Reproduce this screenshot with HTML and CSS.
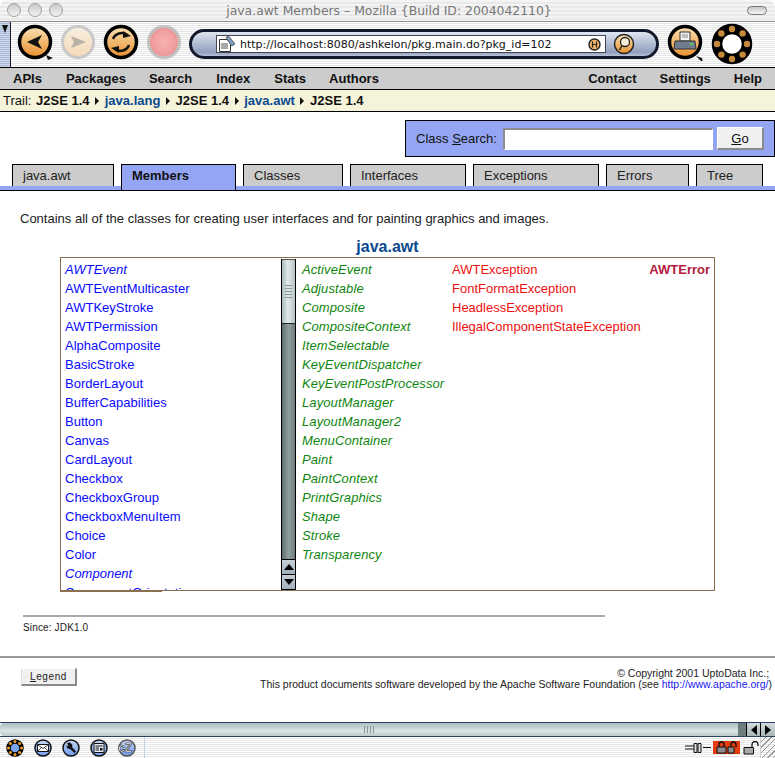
FILE: index.html

```html
<!DOCTYPE html>
<html lang="en">

<head>
    <meta charset="UTF-8">
    <title>java.awt Members - Mozilla {Build ID: 2004042110}</title>
    <link rel="stylesheet" href="styles.css">
</head>

<body>
    <svg class="defs" width="0" height="0">
        <defs>
            <linearGradient id="amber" x1="0" y1="0" x2="0" y2="1">
                <stop offset="0" stop-color="#f9e0b4" />
                <stop offset="1" stop-color="#e98f2c" />
            </linearGradient>
            <linearGradient id="peach" x1="0" y1="0" x2="0" y2="1">
                <stop offset="0" stop-color="#f8efe2" />
                <stop offset="1" stop-color="#f5d9b6" />
            </linearGradient>
            <radialGradient id="blush" cx="0.5" cy="0.5" r="0.5">
                <stop offset="0" stop-color="#f7b0b0" />
                <stop offset="0.7" stop-color="#f2a0a0" />
                <stop offset="1" stop-color="#e99090" />
            </radialGradient>
            <linearGradient id="sky" x1="0" y1="0" x2="0" y2="1">
                <stop offset="0" stop-color="#c8d8f4" />
                <stop offset="1" stop-color="#6f9bf0" />
            </linearGradient>
        </defs>
    </svg>

    <div class="window">
        <header class="titlebar">
            <div class="lights">
                <span class="light"></span>
                <span class="light"></span>
                <span class="light"></span>
            </div>
            <div class="win-title">java.awt Members &#8211; Mozilla {Build ID: 2004042110}</div>
            <span class="collapse"></span>
        </header>

        <div class="toolbar">
            <div class="grip"><span class="grip-arrow"></span></div>
            <svg class="nav-icons" width="172" height="46" viewBox="0 0 172 46">
                <circle cx="24" cy="20" r="15.5" fill="url(#amber)" stroke="#000" stroke-width="3.5" />
                <path d="M16 20 L31 13 L27 20 L31 27 Z" fill="#111" />
                <path d="M35 33 L42 36 L37 38 Z" fill="#111" />
                <circle cx="67" cy="20" r="15.5" fill="url(#peach)" stroke="#c9c9c9" stroke-width="3" />
                <path d="M75 20 L60 14 L63 20 L60 26 Z" fill="#b8b2a8" />
                <circle cx="110" cy="20" r="15.5" fill="url(#amber)" stroke="#000" stroke-width="3.5" />
                <path d="M102 17 A9 9 0 0 1 116 13" fill="none" stroke="#111" stroke-width="2.5" />
                <path d="M112 9 L120 14 L112 16 Z" fill="#111" />
                <path d="M118 23 A9 9 0 0 1 104 27" fill="none" stroke="#111" stroke-width="2.5" />
                <path d="M108 31 L100 26 L108 24 Z" fill="#111" />
                <circle cx="153" cy="20" r="15.5" fill="url(#blush)" stroke="#c4c0c0" stroke-width="3" />
            </svg>
            <div class="urlbar">
                <div class="urlfield">
                    <svg class="page-icon" width="18" height="17" viewBox="0 0 18 17">
                        <path d="M1.500 3.500 H9 L12.500 7 V15.500 H1.500 Z" fill="#fff" stroke="#333" />
                        <path d="M3 8 H10 M3 10 H10 M3 12 H10" stroke="#555" />
                        <path d="M8 1 L11 0.500 L17 8 L13.500 10 Z" fill="#7d9dc4" stroke="#333" stroke-width="0.700" />
                    </svg>
                    <span class="urltext">http://localhost:8080/ashkelon/pkg.main.do?pkg_id=102</span>
                    <svg class="history-icon" width="13" height="13" viewBox="0 0 13 13">
                        <circle cx="6.500" cy="6.500" r="5.500" fill="#f1b268" stroke="#222" stroke-width="1.400" />
                        <path d="M4.500 3.500 V9.500 M8.500 3.500 V9.500 M4.500 6.500 H8.500" stroke="#222" stroke-width="1.200" fill="none" />
                    </svg>
                </div>
                <svg class="search-icon" width="22" height="22" viewBox="0 0 22 22">
                    <circle cx="11" cy="11" r="9.500" fill="url(#amber)" stroke="#222" stroke-width="1.500" />
                    <circle cx="12" cy="9" r="4.500" fill="#fbeed8" stroke="#222" stroke-width="1.300" />
                    <path d="M9 12.500 L6.500 17" stroke="#222" stroke-width="1.500" />
                </svg>
            </div>
            <svg class="print-icon" width="38" height="38" viewBox="0 0 38 38">
                <circle cx="19" cy="19" r="15.500" fill="url(#amber)" stroke="#000" stroke-width="3.500" />
                <path d="M14 9 H24 V18 H14 Z" fill="#f4f4f4" stroke="#333" />
                <path d="M16 12 H22 M16 14 H22" stroke="#888" />
                <path d="M9 18 H29 L30 26 H8 Z" fill="#717c8e" stroke="#333" />
                <path d="M24 21 H27" stroke="#4fce5a" stroke-width="2" />
                <path d="M30 33 L36 35 L37 40" fill="#111" />
            </svg>
            <svg class="ring-icon" width="42" height="42" viewBox="0 0 42 42">
                <circle cx="21" cy="21" r="15" fill="#fff" stroke="#000" stroke-width="10.500" />
                <circle cx="21" cy="6" r="3.200" fill="#c88a3a" />
                <circle cx="31.600" cy="10.400" r="3.200" fill="#c88a3a" />
                <circle cx="36" cy="21" r="3.200" fill="#c88a3a" />
                <circle cx="31.600" cy="31.600" r="3.200" fill="#c88a3a" />
                <circle cx="21" cy="36" r="3.200" fill="#c88a3a" />
                <circle cx="10.400" cy="31.600" r="3.200" fill="#c88a3a" />
                <circle cx="6" cy="21" r="3.200" fill="#c88a3a" />
                <circle cx="10.400" cy="10.400" r="3.200" fill="#c88a3a" />
            </svg>
        </div>

        <nav class="menubar">
            <div class="menu-group">
                <a class="m-apis">APIs</a>
                <a class="m-packages">Packages</a>
                <a class="m-search">Search</a>
                <a class="m-index">Index</a>
                <a class="m-stats">Stats</a>
                <a>Authors</a>
            </div>
            <div class="menu-group">
                <a class="m-contact">Contact</a>
                <a class="m-settings">Settings</a>
                <a>Help</a>
            </div>
        </nav>

        <div class="trail">
            Trail:
            <b class="trail-first">J2SE 1.4</b><span class="sep"></span><a>java.lang</a><span class="sep"></span><b>J2SE 1.4</b><span class="sep"></span><a>java.awt</a><span class="sep"></span><b>J2SE 1.4</b>
        </div>

        <main class="page">
            <div class="search-row">
                <form class="class-search">
                    <label class="search-label">Class <u>S</u>earch:</label>
                    <input class="search-input" type="text">
                    <button class="go-btn" type="button"><u>G</u>o</button>
                </form>
            </div>

            <div class="tabs">
                <a class="tab tab-pkg">java.awt</a>
                <a class="tab tab-members active">Members</a>
                <a class="tab tab-classes">Classes</a>
                <a class="tab tab-interfaces">Interfaces</a>
                <a class="tab tab-exceptions">Exceptions</a>
                <a class="tab tab-errors">Errors</a>
                <a class="tab tab-tree">Tree</a>
            </div>

            <p class="desc">Contains all of the classes for creating user interfaces and for painting graphics and images.</p>

            <h2 class="pkg-name">java.awt</h2>

            <div class="member-box">
                <div class="class-pane">
                    <ul class="names classes">
                        <li><i>AWTEvent</i></li>
                        <li>AWTEventMulticaster</li>
                        <li>AWTKeyStroke</li>
                        <li>AWTPermission</li>
                        <li>AlphaComposite</li>
                        <li>BasicStroke</li>
                        <li>BorderLayout</li>
                        <li>BufferCapabilities</li>
                        <li>Button</li>
                        <li>Canvas</li>
                        <li>CardLayout</li>
                        <li>Checkbox</li>
                        <li>CheckboxGroup</li>
                        <li>CheckboxMenuItem</li>
                        <li>Choice</li>
                        <li>Color</li>
                        <li><i>Component</i></li>
                        <li>ComponentOrientation</li>
                    </ul>
                </div>
                <div class="vscroll">
                    <div class="v-thumb"><span class="v-grip"></span></div>
                    <div class="v-track"></div>
                    <div class="v-btn"><span class="tri-up"></span></div>
                    <div class="v-btn"><span class="tri-down"></span></div>
                </div>
                <ul class="names interfaces">
                    <li>ActiveEvent</li>
                    <li>Adjustable</li>
                    <li>Composite</li>
                    <li>CompositeContext</li>
                    <li>ItemSelectable</li>
                    <li>KeyEventDispatcher</li>
                    <li>KeyEventPostProcessor</li>
                    <li>LayoutManager</li>
                    <li>LayoutManager2</li>
                    <li>MenuContainer</li>
                    <li>Paint</li>
                    <li>PaintContext</li>
                    <li>PrintGraphics</li>
                    <li>Shape</li>
                    <li>Stroke</li>
                    <li>Transparency</li>
                </ul>
                <ul class="names exceptions">
                    <li>AWTException</li>
                    <li>FontFormatException</li>
                    <li>HeadlessException</li>
                    <li>IllegalComponentStateException</li>
                </ul>
                <ul class="names errors">
                    <li>AWTError</li>
                </ul>
            </div>

            <div class="since">Since: JDK1.0</div>

            <footer class="page-foot">
                <button class="legend-btn" type="button"><u>L</u>egend</button>
                <div class="copyright">
                    &copy; Copyright 2001 UptoData Inc.;&nbsp;<br>
                    This product documents software developed by the Apache Software Foundation (see <a>http://www.apache.org/</a>)
                </div>
            </footer>
        </main>

        <div class="hscroll">
            <div class="h-thumb"><span class="h-grip"></span></div>
            <div class="h-track"></div>
            <div class="h-btn"><span class="tri-left"></span></div>
            <div class="h-btn"><span class="tri-right"></span></div>
        </div>

        <div class="statusbar">
            <div class="task-icons">
                <svg width="18" height="18" viewBox="0 0 18 18">
                    <circle cx="9" cy="9" r="6.500" fill="#7ba3ef" stroke="#000" stroke-width="4.500" />
                    <circle cx="9" cy="2.500" r="1.500" fill="#f0a030" />
                    <circle cx="15.500" cy="9" r="1.500" fill="#f0a030" />
                    <circle cx="9" cy="15.500" r="1.500" fill="#f0a030" />
                    <circle cx="2.500" cy="9" r="1.500" fill="#f0a030" />
                    <circle cx="13.600" cy="4.400" r="1.500" fill="#f0a030" />
                    <circle cx="13.600" cy="13.600" r="1.500" fill="#f0a030" />
                    <circle cx="4.400" cy="13.600" r="1.500" fill="#f0a030" />
                    <circle cx="4.400" cy="4.400" r="1.500" fill="#f0a030" />
                </svg>
                <svg width="18" height="18" viewBox="0 0 18 18">
                    <circle cx="9" cy="9" r="8" fill="url(#sky)" stroke="#111" stroke-width="1.500" />
                    <path d="M3.500 5.500 H14.500 V12.500 H3.500 Z" fill="#fff" stroke="#111" />
                    <path d="M3.500 5.500 L9 9.500 L14.500 5.500 M3.500 12.500 L7.500 8.500 M14.500 12.500 L10.500 8.500" fill="none" stroke="#111" stroke-width="0.800" />
                </svg>
                <svg width="18" height="18" viewBox="0 0 18 18">
                    <circle cx="9" cy="9" r="8" fill="url(#sky)" stroke="#111" stroke-width="1.500" />
                    <path d="M5 4 L8 3.500 L10.500 6 L10 8 L14 12.500 L12.500 14 L8 10 L5.500 9.500 L4 6.500 L6.500 7.500 Z" fill="#111" />
                </svg>
                <svg width="18" height="18" viewBox="0 0 18 18">
                    <circle cx="9" cy="9" r="8" fill="url(#sky)" stroke="#111" stroke-width="1.500" />
                    <path d="M4 4.500 H14 V13.500 H4 Z" fill="#e8eef8" stroke="#111" />
                    <path d="M5.500 7 H12.500 M5.500 9 H9 M5.500 11 H9" stroke="#111" />
                    <path d="M10 9 H12.500 V11.500 H10 Z" fill="#111" />
                </svg>
                <svg width="18" height="18" viewBox="0 0 18 18">
                    <circle cx="9" cy="9" r="8" fill="url(#sky)" stroke="#555" stroke-width="1.500" />
                    <text x="0" y="13" class="chat-mark">cZ</text>
                </svg>
            </div>
            <div class="status-fill"></div>
            <svg class="plug" width="26" height="12" viewBox="0 0 26 12">
                <path d="M0 4 H9 M0 7 H9 M18 5.500 H26" stroke="#111" stroke-width="1.200" />
                <path d="M9 1.500 H12 V10.500 H9 Z M13 1.500 H16 V10.500 H13 Z" fill="#ddd" stroke="#111" />
            </svg>
            <div class="lock-cell">
                <svg width="22" height="13" viewBox="0 0 22 13">
                    <path d="M1 6 H10 V12 H1 Z" fill="#8d8d8d" stroke="#111" />
                    <path d="M3 6 V3.500 A2.500 2.500 0 0 1 8 3.500 V6" fill="none" stroke="#111" stroke-width="1.300" />
                    <path d="M12 6 H18 V12 H12 Z" fill="#8d8d8d" stroke="#111" />
                    <path d="M15 6 V3.500 A2.500 2.500 0 0 1 20 3.500 V6" fill="none" stroke="#111" stroke-width="1.300" />
                </svg>
            </div>
            <svg class="lock-open" width="17" height="14" viewBox="0 0 17 14">
                <path d="M1 6.500 H10.500 V13 H1 Z" fill="#aaa" stroke="#111" />
                <path d="M9 6.500 V3.500 A3 3 0 0 1 15 3.500 V5" fill="none" stroke="#111" stroke-width="1.300" />
            </svg>
            <div class="resize"></div>
        </div>
    </div>
</body>

</html>
```

FILE: styles.css

```css
* {
    box-sizing: border-box;
}

body {
    margin: 0;
    background-color: #fff;
    font-family: 'Liberation Sans', Arial, sans-serif;
    color: #222;
    overflow: hidden;
}

ul {
    list-style: none;
    margin: 0;
    padding: 0;
}

.defs {
    display: block;
}

.window {
    width: 775px;
    height: 758px;
    display: flex;
    flex-direction: column;
    overflow: hidden;
}

/* title bar */
.titlebar {
    height: 22px;
    flex: none;
    display: flex;
    align-items: center;
    justify-content: space-between;
    padding: 0 8px 1px 7px;
    border-bottom: 1px solid #8f8f8f;
    border-radius: 7px 7px 0 0;
    background: repeating-linear-gradient(#f4f4f4 0 2px, #e9e9e9 2px 4px);
}

.lights {
    display: flex;
    gap: 7px;
}

.light {
    width: 14px;
    height: 14px;
    border-radius: 50%;
    border: 1px solid #a0a0a0;
    background: linear-gradient(#c9c9c9, #f4f4f4);
}

.win-title {
    font-family: 'DejaVu Sans', sans-serif;
    font-size: 12.4px;
    color: #777;
}

.collapse {
    width: 20px;
    height: 9px;
    margin-left: 32px;
    border-radius: 5px;
    border: 1px solid #777;
    background: linear-gradient(#c8c8c8, #f5f5f5);
}

/* toolbar */
.toolbar {
    height: 46px;
    flex: none;
    display: flex;
    align-items: flex-start;
    border-bottom: 1px solid #000;
    background: repeating-linear-gradient(#fff 0 1px, #e4e4e4 1px 2px);
}

.grip {
    width: 11px;
    height: 45px;
    flex: none;
    padding: 3px 0 0 2px;
    border-right: 1px solid #222;
    background: repeating-linear-gradient(#cfd9ee 0 1px, #a9b8d6 1px 2px);
}

.grip-arrow {
    display: block;
    width: 0;
    height: 0;
    border-left: 3px solid transparent;
    border-right: 3px solid transparent;
    border-top: 8px solid #111;
}

.nav-icons {
    flex: none;
}

.urlbar {
    width: 470px;
    height: 30px;
    flex: none;
    margin: 7px 0 0 6px;
    display: flex;
    align-items: center;
    gap: 7px;
    padding-left: 24px;
    border: 3px solid #14182a;
    border-radius: 16px;
    background: linear-gradient(#dfe5f1, #8f9fbe 85%, #b9c3d7);
}

.urlfield {
    width: 390px;
    height: 18px;
    flex: none;
    display: flex;
    align-items: center;
    padding: 0 4px 0 1px;
    border: 1px solid #445;
    background-color: #fff;
}

.page-icon {
    flex: none;
}

.urltext {
    flex: 1;
    margin-left: 4px;
    font-family: 'DejaVu Sans', sans-serif;
    font-size: 11px;
    color: #111;
    white-space: nowrap;
}

.history-icon {
    flex: none;
}

.search-icon {
    flex: none;
}

.print-icon {
    flex: none;
    margin: 1px 0 0 7px;
}

.ring-icon {
    flex: none;
    margin: 1px 0 0 7px;
}

/* site menu */
.menubar {
    height: 22px;
    flex: none;
    display: flex;
    justify-content: space-between;
    align-items: center;
    padding: 0 13px 1px;
    background-color: #ccc;
    border-bottom: 1px solid #000;
    font-size: 13px;
    font-weight: bold;
    color: #111;
}

.menu-group {
    display: flex;
}

.m-apis {
    margin-right: 24px;
}

.m-packages {
    margin-right: 23px;
}

.m-search,
.m-index {
    margin-right: 24px;
}

.m-stats {
    margin-right: 23px;
}

.m-contact,
.m-settings {
    margin-right: 23px;
}

.trail {
    height: 22px;
    flex: none;
    padding: 3px 0 0 3px;
    background-color: #f5f3da;
    border-bottom: 1px solid #000;
    font-size: 13px;
    color: #111;
    white-space: nowrap;
}

.trail-first {
    margin-left: 1px;
}

.trail a {
    font-weight: bold;
    color: #0b4a8f;
}

.sep {
    display: inline-block;
    width: 0;
    height: 0;
    margin: 0 5.6px;
    border-top: 4px solid transparent;
    border-bottom: 4px solid transparent;
    border-left: 4px solid #111;
}

/* page */
.page {
    height: 610px;
    flex: none;
    padding-top: 8px;
    overflow: hidden;
}

.search-row {
    display: flex;
    justify-content: flex-end;
}

.class-search {
    width: 370px;
    height: 37px;
    margin: 0;
    display: flex;
    align-items: center;
    padding-left: 10px;
    border: 1px solid #000;
    background-color: #94a6f3;
    font-size: 13px;
}

.search-label {
    width: 87px;
    flex: none;
    color: #111;
}

.search-input {
    width: 210px;
    height: 22px;
    flex: none;
    border: 1px solid #fff;
    border-top: 2px solid #8c8c8c;
    border-left: 2px solid #8c8c8c;
    background-color: #fff;
}

.go-btn {
    width: 47px;
    height: 23px;
    flex: none;
    margin-left: 4px;
    padding: 0;
    border: 0;
    border-top: 1px solid #fff;
    border-left: 1px solid #fff;
    border-right: 2px solid #8a8a8a;
    border-bottom: 2px solid #8a8a8a;
    background-color: #f0f0f0;
    font-family: 'Liberation Sans', Arial, sans-serif;
    font-size: 13px;
    color: #111;
}

.tabs {
    height: 27px;
    margin-top: 7px;
    display: flex;
    gap: 7px;
    padding-left: 12px;
    align-items: flex-start;
    border-bottom: 1px solid #000;
    background: linear-gradient(transparent 22px, #94a6f3 22px);
}

.tab {
    height: 22px;
    padding: 3px 0 0 10px;
    border: 1px solid #000;
    border-bottom: 0;
    background-color: #ccc;
    font-size: 13px;
    color: #222;
}

.tab.active {
    height: 26px;
    background-color: #94a6f3;
    font-weight: bold;
    color: #111;
    padding-left: 10px;
}

.tab-pkg {
    width: 102px;
}

.tab-members {
    width: 115px;
}

.tab-classes {
    width: 100px;
}

.tab-interfaces {
    width: 116px;
}

.tab-exceptions {
    width: 126px;
}

.tab-errors {
    width: 83px;
}

.tab-tree {
    width: 67px;
}

.desc {
    margin: 20px 0 0 20px;
    font-size: 13px;
    line-height: 16px;
    color: #222;
}

.pkg-name {
    margin: 11px 0 1px;
    font-size: 16px;
    line-height: 18px;
    font-weight: bold;
    text-align: center;
    color: #0b4a8f;
}

.member-box {
    position: relative;
    width: 655px;
    height: 334px;
    margin-left: 60px;
    display: flex;
    padding-top: 1px;
    border: 1px solid #8b6f4e;
}

/* the inner frame pokes one pixel below the outer border */
.member-box::after {
    content: "";
    position: absolute;
    left: -1px;
    bottom: -2px;
    width: 102px;
    height: 1px;
    background-color: #8b6f4e;
}

.class-pane {
    width: 220px;
    height: 331px;
    flex: none;
    overflow: hidden;
    padding-left: 4px;
}

.names {
    flex: none;
    padding-top: 1px;
    font-size: 13px;
    line-height: 19px;
}

.classes {
    color: #0a0aff;
}

.vscroll {
    width: 15px;
    height: 331px;
    flex: none;
    display: flex;
    flex-direction: column;
    border: 1px solid #000;
    border-top: 0;
}

.v-thumb {
    height: 65px;
    flex: none;
    display: flex;
    align-items: center;
    justify-content: center;
    border-top: 1px solid #555;
    border-bottom: 1px solid #222;
    background: linear-gradient(90deg, #a9b9b9, #e2eaea 45%, #b5c3c3);
}

.v-grip {
    width: 7px;
    height: 14px;
    background: repeating-linear-gradient(#8a9898 0 1px, transparent 1px 3px);
}

.v-track {
    flex: 1;
    background: linear-gradient(90deg, #5f6f6f, #8f9f9f 50%, #6d7d7d);
}

.v-btn {
    height: 15px;
    flex: none;
    display: flex;
    align-items: center;
    justify-content: center;
    border-top: 1px solid #000;
    background: linear-gradient(#c5d0d8, #9fb0bb);
}

.tri-up {
    width: 0;
    height: 0;
    border-left: 5px solid transparent;
    border-right: 5px solid transparent;
    border-bottom: 6px solid #000;
}

.tri-down {
    width: 0;
    height: 0;
    border-left: 5px solid transparent;
    border-right: 5px solid transparent;
    border-top: 6px solid #000;
}

.interfaces {
    width: 150px;
    margin-left: 6px;
    font-style: italic;
    letter-spacing: 0.1px;
    color: #0f860f;
}

.exceptions {
    color: #ee1111;
}

.errors {
    flex: 1;
    padding-right: 4px;
    text-align: right;
    font-weight: bold;
    color: #b3203f;
}

.since {
    width: 582px;
    margin: 24px 0 0 23px;
    padding-top: 5px;
    border-top: 2px solid #aaa;
    font-size: 10px;
    line-height: 12px;
    letter-spacing: 0.15px;
    color: #222;
}

.page-foot {
    height: 66px;
    margin-top: 22px;
    display: flex;
    justify-content: space-between;
    align-items: flex-start;
    padding: 10px 3px 0 21px;
    border-top: 2px solid #999;
}

.legend-btn {
    width: 56px;
    height: 18px;
    padding: 0;
    border: 0;
    border-top: 1px solid #fff;
    border-left: 1px solid #ddd;
    border-right: 2px solid #8a8a8a;
    border-bottom: 2px solid #8a8a8a;
    background-color: #f0f0f0;
    font-family: 'Liberation Sans', Arial, sans-serif;
    font-size: 10px;
    letter-spacing: 0.6px;
    color: #222;
}

.copyright {
    margin-top: 0;
    font-size: 10.5px;
    line-height: 11px;
    text-align: right;
    color: #222;
}

.copyright a {
    color: #1a1aee;
}

/* browser chrome at the bottom */
.hscroll {
    height: 15px;
    flex: none;
    display: flex;
    border-top: 1px solid #2e4160;
    border-bottom: 1px solid #2e4160;
}

.h-thumb {
    width: 738px;
    flex: none;
    display: flex;
    align-items: center;
    justify-content: center;
    border-radius: 4px 0 0 4px;
    background: linear-gradient(#aebdbd, #d9e3e3 60%, #bccaca);
}

.h-grip {
    width: 11px;
    height: 7px;
    background: repeating-linear-gradient(90deg, #8a9898 0 1px, transparent 1px 3px);
}

.h-track {
    width: 8px;
    flex: none;
    background-color: #6d7d7d;
}

.h-btn {
    width: 14px;
    flex: none;
    display: flex;
    align-items: center;
    justify-content: center;
    border-left: 1px solid #000;
    background: linear-gradient(#d3dcdc, #a8b6b6);
}

.h-btn:last-child {
    width: 15px;
}

.tri-left {
    width: 0;
    height: 0;
    border-top: 5px solid transparent;
    border-bottom: 5px solid transparent;
    border-right: 6px solid #000;
}

.tri-right {
    width: 0;
    height: 0;
    border-top: 5px solid transparent;
    border-bottom: 5px solid transparent;
    border-left: 6px solid #000;
}

.statusbar {
    height: 21px;
    flex: none;
    display: flex;
    align-items: center;
    background: repeating-linear-gradient(#fff 0 1px, #e6e6e6 1px 2px);
}

.task-icons {
    width: 145px;
    height: 21px;
    flex: none;
    display: flex;
    align-items: center;
    gap: 10px;
    padding-left: 6px;
    border-right: 1px solid #c3d3e0;
}

.chat-mark {
    font-family: 'Liberation Sans', Arial, sans-serif;
    font-size: 12px;
    font-weight: bold;
    fill: #fff;
    stroke: #222;
    stroke-width: 0.6px;
}

.status-fill {
    flex: 1;
}

.plug {
    flex: none;
    margin-right: 2px;
}

.lock-cell {
    width: 27px;
    height: 13px;
    flex: none;
    display: flex;
    align-items: center;
    justify-content: center;
    background-color: #e33c10;
}

.lock-open {
    flex: none;
    margin-left: 3px;
}

.resize {
    width: 15px;
    height: 21px;
    flex: none;
    border-left: 1px solid #c8d0d8;
    background: repeating-linear-gradient(135deg, transparent 0 3px, #999 3px 4px);
}
```
